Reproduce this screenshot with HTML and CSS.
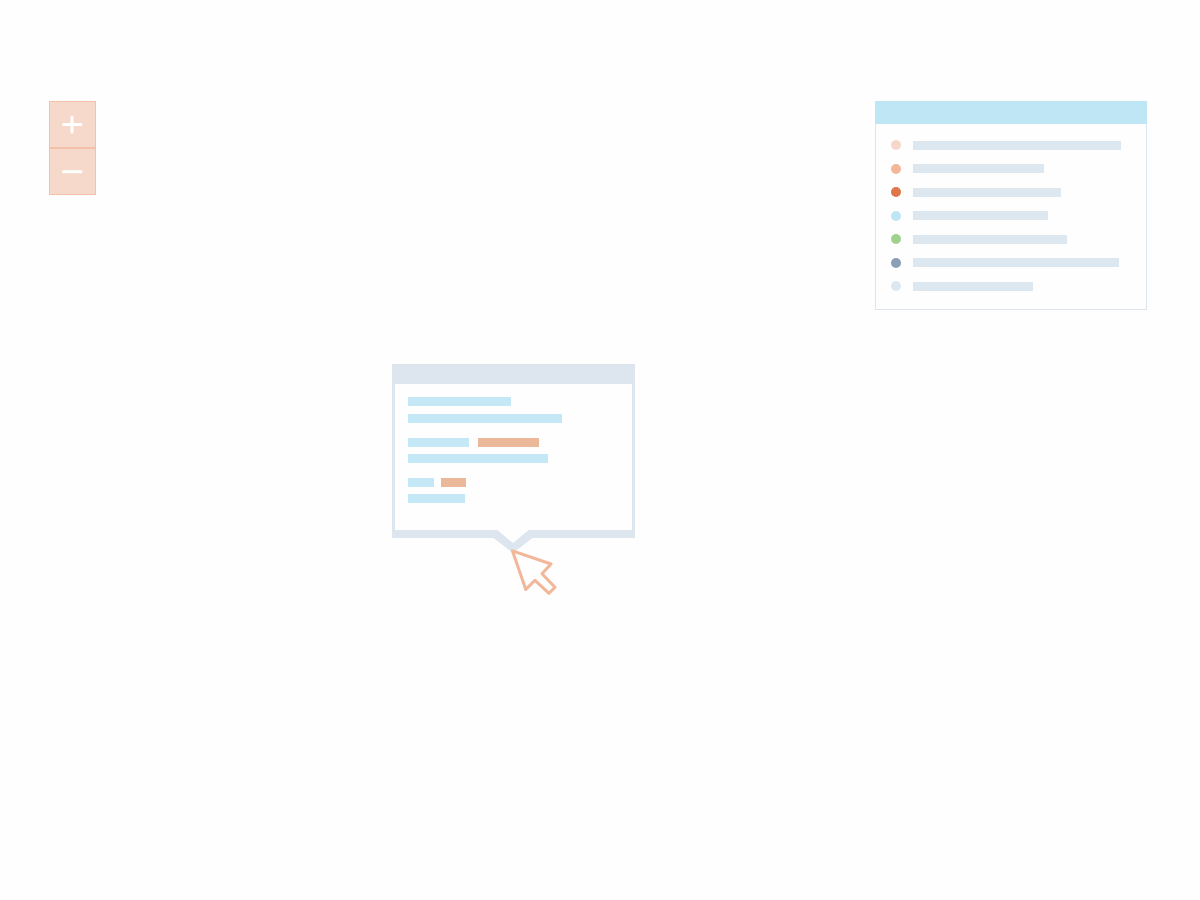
FILE: index.html
```html
<!DOCTYPE html>
<html lang="en">
<head>
<meta charset="utf-8">
<meta name="viewport" content="width=device-width, initial-scale=1">
<title>Map</title>
<link rel="stylesheet" href="styles.css">
</head>
<body>
<main class="map">
  <div class="overlay">
    <div class="zoom">
      <button class="zoom-button" type="button" aria-label="Zoom in">
        <svg class="zoom-icon" viewBox="0 0 45 45" aria-hidden="true"><path d="M13.5 22.5h17.500M22 15v15"/></svg>
      </button>
      <button class="zoom-button" type="button" aria-label="Zoom out">
        <svg class="zoom-icon" viewBox="0 0 45 45" aria-hidden="true"><path d="M13.5 22.8h17.500"/></svg>
      </button>
    </div>
    <section class="legend" aria-label="Legend">
      <div class="legend-head"></div>
      <ul class="legend-list">
        <li class="legend-item"><span class="dot dot-blush"></span><span class="line" style="width:208px"></span></li>
        <li class="legend-item"><span class="dot dot-peach"></span><span class="line" style="width:131px"></span></li>
        <li class="legend-item"><span class="dot dot-rust"></span><span class="line" style="width:148px"></span></li>
        <li class="legend-item"><span class="dot dot-sky"></span><span class="line" style="width:135px"></span></li>
        <li class="legend-item"><span class="dot dot-green"></span><span class="line" style="width:154px"></span></li>
        <li class="legend-item"><span class="dot dot-slate"></span><span class="line" style="width:206px"></span></li>
        <li class="legend-item"><span class="dot dot-mist"></span><span class="line" style="width:120px"></span></li>
      </ul>
    </section>
  </div>

  <section class="popup" aria-label="Place details">
    <div class="group group-lead">
      <div class="row"><span class="bar" style="width:103px"></span></div>
      <div class="row"><span class="bar" style="width:154px"></span></div>
    </div>
    <div class="group">
      <div class="row row-wide"><span class="bar" style="width:61px"></span><span class="bar bar-accent" style="width:61px"></span></div>
      <div class="row"><span class="bar" style="width:140px"></span></div>
    </div>
    <div class="group">
      <div class="row"><span class="bar" style="width:26px"></span><span class="bar bar-accent" style="width:25px"></span></div>
      <div class="row"><span class="bar" style="width:57px"></span></div>
    </div>
    <svg class="pointer" viewBox="0 0 66 68" aria-hidden="true">
      <path class="pointer-gap" d="M5 0H37L21 13.5Z"/>
      <path class="pointer-tail" d="M5 0L21 13L37 0V8H40.5L21 23L1.5 8H5Z"/>
      <path class="pointer-cursor" d="M20.4 20.8L59 34L50 43.7L63 57.3L57 63.3L43 50.3L33.8 59.4Z"/>
    </svg>
  </section>
</main>
</body>
</html>
```

FILE: styles.css
```css
* {
  box-sizing: border-box;
}

body {
  margin: 0;
  background: #fefefe;
  font-family: "Liberation Sans", sans-serif;
}

.map {
  position: relative;
  min-height: 100vh;
}

.overlay {
  display: flex;
  justify-content: space-between;
  align-items: flex-start;
  padding: 101px 53px 0 49px;
}

.zoom {
  display: flex;
  flex-direction: column;
}

.zoom-button {
  width: 47px;
  height: 47px;
  padding: 0;
  border: 1px solid #f3c0a8;
  background: #f7d9cb;
  cursor: pointer;
}

.zoom-icon {
  display: block;
  width: 45px;
  height: 45px;
  fill: none;
  stroke: #fff;
  stroke-width: 3;
  stroke-linecap: round;
}

.legend {
  width: 272px;
  border: 1px solid #dde6f0;
  border-top: 0;
  background: #fefefe;
}

.legend-head {
  height: 23px;
  margin: 0 -1px;
  background: #bee6f5;
}

.legend-list {
  display: flex;
  flex-direction: column;
  justify-content: space-between;
  min-height: 185px;
  margin: 0;
  padding: 16px 15px 18px;
  list-style: none;
}

.legend-item {
  display: flex;
  align-items: center;
  gap: 12px;
  height: 10px;
}

.dot {
  width: 10px;
  height: 10px;
  border-radius: 50%;
}

.dot-blush { background: #f7d7ca; }
.dot-peach { background: #f3b698; }
.dot-rust { background: #e0744a; }
.dot-sky { background: #bee6f5; }
.dot-green { background: #a1d18f; }
.dot-slate { background: #889fb5; }
.dot-mist { background: #dde7f0; }

.line {
  height: 9px;
  background: #dde7f0;
}

.popup {
  position: absolute;
  left: 392px;
  top: 364px;
  display: flex;
  flex-direction: column;
  gap: 15px;
  width: 243px;
  padding: 13px 13px 27px;
  border: solid #dde5ef;
  border-width: 20px 3px 8px;
  background: #fefefe;
}

.group {
  display: flex;
  flex-direction: column;
  gap: 7px;
}

.group-lead {
  gap: 8px;
}

.row {
  display: flex;
  gap: 7px;
}

.row-wide {
  gap: 9px;
}

.bar {
  height: 9px;
  background: #c5e8f6;
}

.bar-accent {
  background: #ebb99a;
}

.pointer {
  position: absolute;
  left: 97px;
  top: 100%;
  width: 66px;
  height: 68px;
}

.pointer-gap {
  fill: #fefefe;
}

.pointer-tail {
  fill: #dde5ef;
}

.pointer-cursor {
  fill: #fefefe;
  stroke: #f3b699;
  stroke-width: 3;
  stroke-linejoin: round;
}
```
